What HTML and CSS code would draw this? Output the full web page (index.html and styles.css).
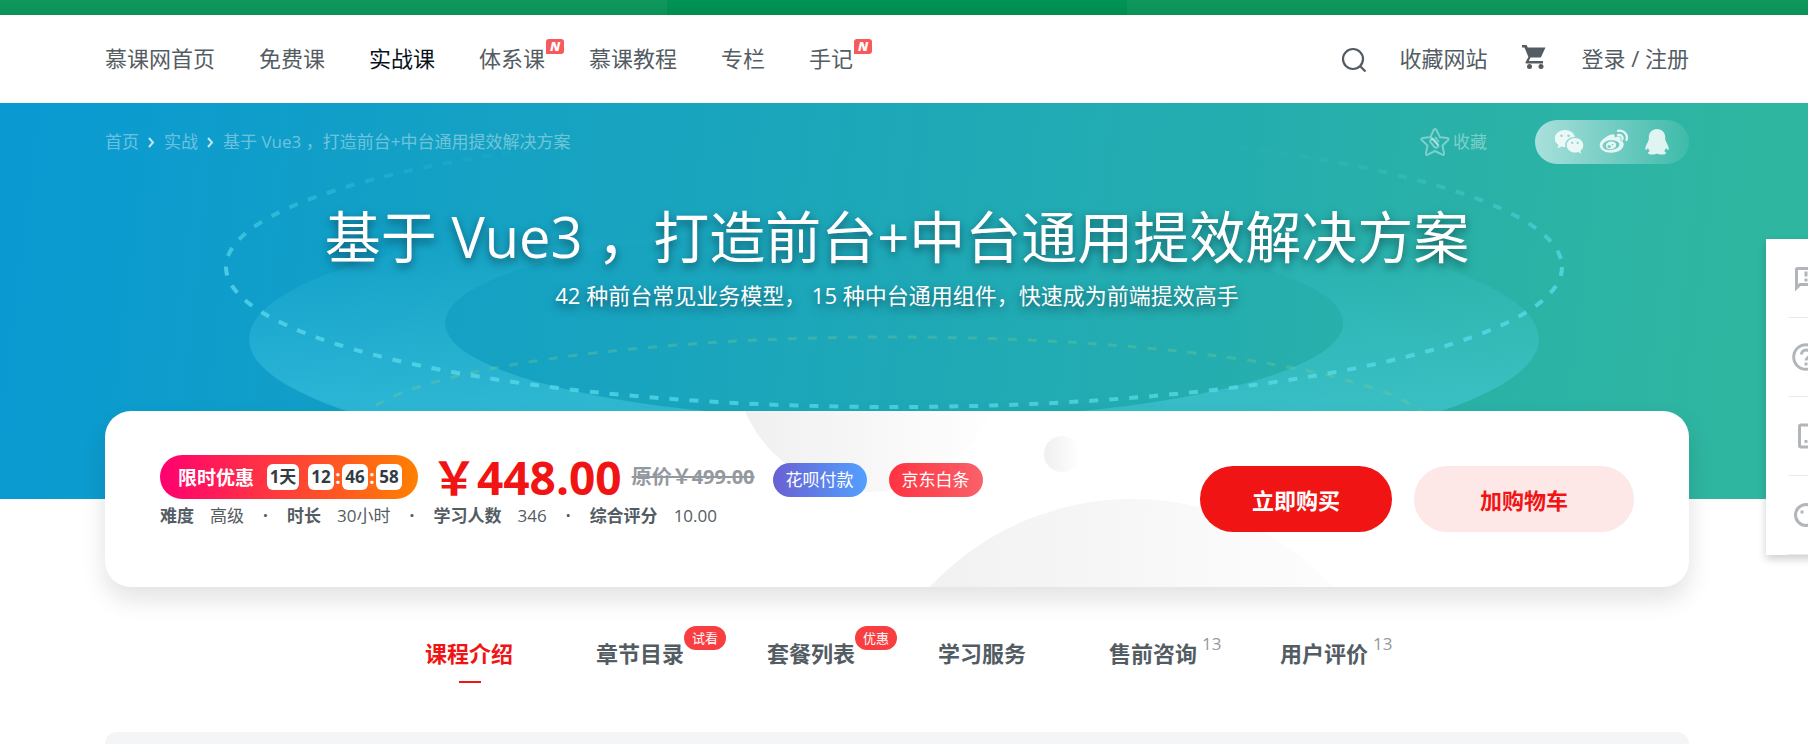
FILE: index.html
```html
<!DOCTYPE html>
<html lang="zh-CN">
<head>
<meta charset="utf-8">
<meta name="viewport" content="width=device-width, initial-scale=1">
<title>基于 Vue3 ，打造前台+中台通用提效解决方案</title>
<link rel="stylesheet" href="styles.css">
</head>
<body>
<div class="promo"><div class="promo-inner"></div></div>

<header class="header shell">
  <nav class="nav">
    <a href="#">慕课网首页</a>
    <a href="#">免费课</a>
    <a href="#" class="current">实战课</a>
    <a href="#">体系课<span class="new">N</span></a>
    <a href="#">慕课教程</a>
    <a href="#">专栏</a>
    <a href="#">手记<span class="new">N</span></a>
  </nav>
  <div class="tools">
    <button class="icon-btn" type="button" aria-label="搜索">
      <svg width="26" height="26" viewBox="0 0 26 26" fill="none" stroke="#545c63" stroke-width="2.2"><circle cx="12" cy="12" r="10"/><path d="M19 19l5.500 5.500"/></svg>
    </button>
    <a href="#" class="fav-site">收藏网站</a>
    <a href="#" class="cart" aria-label="购物车">
      <svg width="26" height="26" viewBox="0 0 26 26" fill="#545c63"><path d="M1 1h4.500L6.800 3.500H24.500L19.800 13.500H9.500L7.800 17H22v2.500H5.500q-1.500 0-.7-1.800L7.400 13 3.500 3.500H1z"/><circle cx="8.500" cy="22.500" r="2.500"/><circle cx="20" cy="22.500" r="2.500"/></svg>
    </a>
    <a href="#">登录 / 注册</a>
  </div>
</header>

<section class="hero">
  <svg class="hero-art" width="1400" height="396" viewBox="197 103 1400 396" fill="none" aria-hidden="true">
    <defs>
      <linearGradient id="ring" x1="0" y1="230" x2="0" y2="430" gradientUnits="userSpaceOnUse"><stop offset="0" stop-color="#52d5ea" stop-opacity="0"/><stop offset="1" stop-color="#52d5ea" stop-opacity=".46"/></linearGradient>
      <linearGradient id="dash" x1="0" y1="145" x2="0" y2="400" gradientUnits="userSpaceOnUse"><stop offset="0" stop-color="#5cdcec" stop-opacity="0"/><stop offset=".5" stop-color="#5cdcec" stop-opacity=".75"/><stop offset="1" stop-color="#5cdcec" stop-opacity=".7"/></linearGradient>
    </defs>
    <path fill="url(#ring)" fill-rule="evenodd" d="M249 339a645 136 0 1 0 1290 0a645 136 0 1 0-1290 0zM445 323a449 97 0 1 0 898 0a449 97 0 1 0-898 0z"/>
    <ellipse cx="894" cy="432" rx="540" ry="95" stroke="#7fd08a" stroke-opacity=".3" stroke-width="3" stroke-dasharray="9 11"/>
    <ellipse cx="894" cy="267" rx="668" ry="140" stroke="url(#dash)" stroke-width="4" stroke-dasharray="9 11"/>
  </svg>
  <div class="hero-bar shell">
    <nav class="crumbs" aria-label="面包屑">
      <a href="#">首页</a>
      <svg width="7" height="11" viewBox="0 0 7 11" fill="none" stroke="#bfe6ef" stroke-width="2"><path d="M1 1l4 4.500L1 10"/></svg>
      <a href="#">实战</a>
      <svg width="7" height="11" viewBox="0 0 7 11" fill="none" stroke="#bfe6ef" stroke-width="2"><path d="M1 1l4 4.500L1 10"/></svg>
      <span>基于 Vue3 ，打造前台+中台通用提效解决方案</span>
    </nav>
    <button class="collect" type="button">
      <svg width="30" height="30" viewBox="0 0 30 30" fill="none" stroke="currentColor" stroke-width="2" stroke-linejoin="round" stroke-linecap="round"><path d="M9.500 10.300l-7 .8q-2 .5-.5 2.200l5.500 5.200L6 26.500q0 2 1.800 1.200L15 24l7.200 3.700q1.800.8 1.800-1.200l-1.500-8 5.500-5.200q1.500-1.700-.5-2.200l-7.500-.8L16.200 2.800q-1.200-1.800-2.400 0l-2.600 5.400q-.7 1.600.5 3l6 6.500"/><path d="M18.500 14.500l-3-4M11 12.500q-1.500 1.200-.3 2.800l3.600 4.500q1.600 1.700 3.200.5 1.600-1.300.3-3l-4-4.800q-1.300-1.300-2.800 0z"/></svg>
      <span>收藏</span>
    </button>
    <div class="share">
      <a href="#" aria-label="微信"><svg width="30" height="26" viewBox="0 0 30 26" fill="currentColor"><path fill-rule="evenodd" d="M11 1C5 1 .8 4.800.8 9.500c0 2.800 1.400 5 3.700 6.600l-.9 3.400 3.800-2q1.800.5 4 .5C10 12.500 14.500 7.800 21 8 20 4 16 1 11 1zM7.500 5.500a1.300 1.300 0 1 1 0 2.600 1.300 1.300 0 0 1 0-2.600zm7 0a1.300 1.300 0 1 1 0 2.600 1.300 1.300 0 0 1 0-2.600z"/><path fill-rule="evenodd" d="M21 9c-4.700 0-8.300 3.200-8.300 7.200s3.600 7.300 8.300 7.300q1.600 0 3.200-.5l3 1.700-.8-2.800c1.700-1.300 2.900-3.300 2.900-5.700C29.300 12.200 25.600 9 21 9zm-2.800 3.800a1.100 1.100 0 1 1 0 2.200 1.100 1.100 0 0 1 0-2.200zm5.500 0a1.100 1.100 0 1 1 0 2.200 1.100 1.100 0 0 1 0-2.200z"/></svg></a>
      <a href="#" aria-label="微博"><svg width="30" height="26" viewBox="0 0 30 26" fill="currentColor"><path fill-rule="evenodd" d="M11 6c3-1.600 5.700-1 4.600 2.400 4-1.600 7-.8 5.800 2.800 2 .7 3.300 2 3.300 4.200 0 4.300-5.500 8.300-12.300 8.300S.7 20.500.7 16.200C.7 12.500 5.500 8 11 6zM12 11.300c-4.700 0-8.500 2.600-8.500 5.500s3.800 4.700 8.500 4.300c5-.4 8.700-3 8.400-5.800-.3-2.500-3.800-4.100-8.400-4z"/><path fill-rule="evenodd" d="M12.700 12.600c-3.200 0-5.700 1.900-5.700 4.300 0 2 2 3.400 4.700 3.300 3.200-.1 5.600-2.100 5.500-4.400 0-1.900-1.900-3.200-4.500-3.200zm-2.500 3.500a1.700 1.500 0 1 1 0 3 1.700 1.500 0 0 1 0-3zm3.300-1.200a.8.8 0 1 1 0 1.600.8.800 0 0 1 0-1.600z"/><path d="M19 1.800c5.500-1.200 10.200 3.600 8.500 9.200M19 6.200c3-.8 5.300 1.600 4.300 4.300" fill="none" stroke="currentColor" stroke-width="2.300" stroke-linecap="round"/></svg></a>
      <a href="#" aria-label="QQ"><svg width="26" height="28" viewBox="0 0 26 28" fill="currentColor"><path d="M13 1c5 0 8.200 3.600 8.200 8.300v2.500c.3.700.8 1.400 1 2.400 1.500 2.500 2.500 4.500 2.500 6.300 0 2-1 2-2.700-.4-.4 1.300-1 2.300-1.800 3.100 1.700.7 2 1.400 1.800 2.100-.6 1.700-7 1.700-9 .3-2 1.400-8.400 1.400-9-.3-.2-.7.100-1.400 1.800-2.100-.8-.8-1.400-1.800-1.800-3.100-1.700 2.400-2.700 2.400-2.700.4 0-1.800 1-3.800 2.500-6.300.2-1 .7-1.700 1-2.400V9.300C4.800 4.600 8 1 13 1z"/></svg></a>
    </div>
  </div>
  <div class="hero-text shell">
    <h1>基于 Vue3 ，打造前台+中台通用提效解决方案</h1>
    <p>42 种前台常见业务模型， 15 种中台通用组件，快速成为前端提效高手</p>
  </div>
</section>

<main class="shell">
  <section class="card">
    <svg class="card-art" width="640" height="176" viewBox="725 411 640 176" aria-hidden="true">
      <defs><linearGradient id="fade"><stop offset="0" stop-color="#efefef"/><stop offset="1" stop-color="#fff"/></linearGradient></defs>
      <circle cx="868" cy="358" r="134" fill="url(#fade)"/>
      <circle cx="1062" cy="454" r="18" fill="url(#fade)"/>
      <circle cx="1132" cy="775" r="276" fill="url(#fade)"/>
    </svg>
    <div class="offer">
      <div class="price-row">
        <div class="countdown">
          <span class="label">限时优惠</span>
          <span class="cell day">1天</span>
          <span class="cell">12</span><i>:</i><span class="cell">46</span><i>:</i><span class="cell">58</span>
        </div>
        <strong class="price">￥448.00</strong>
        <del class="old">原价￥499.00</del>
        <a href="#" class="pay huabei">花呗付款</a>
        <a href="#" class="pay baitiao">京东白条</a>
      </div>
      <div class="stats">
        <b>难度</b><span>高级</span><i>·</i>
        <b>时长</b><span>30小时</span><i>·</i>
        <b>学习人数</b><span>346</span><i>·</i>
        <b>综合评分</b><span>10.00</span>
      </div>
    </div>
    <div class="actions">
      <button type="button" class="buy">立即购买</button>
      <button type="button" class="add">加购物车</button>
    </div>
  </section>

  <nav class="tabs">
    <a href="#" class="on">课程介绍</a>
    <a href="#">章节目录<span class="badge">试看</span></a>
    <a href="#">套餐列表<span class="badge">优惠</span></a>
    <a href="#">学习服务</a>
    <a href="#">售前咨询<span class="count">13</span></a>
    <a href="#">用户评价<span class="count">13</span></a>
  </nav>
  <section class="panel"></section>
</main>

<aside class="side">
  <a href="#" aria-label="意见反馈"><svg width="28" height="28" viewBox="0 0 28 28" fill="none" stroke="#b2b6ba" stroke-width="3"><path d="M4.500 24V5.500q0-1 1-1h17q1 0 1 1v14q0 1-1 1H8z"/><path d="M14 7.500v5M14 14.500v3"/></svg></a>
  <a href="#" aria-label="帮助"><svg width="28" height="28" viewBox="0 0 28 28" fill="none" stroke="#b2b6ba" stroke-width="3"><circle cx="14" cy="14" r="12.300"/><path d="M9.500 11.500c0-6 9-6 9-.5 0 3.500-4.500 3.500-4.500 6.500M14 19.500v3"/></svg></a>
  <a href="#" aria-label="手机应用"><svg width="28" height="28" viewBox="0 0 28 28" fill="none" stroke="#b2b6ba" stroke-width="3"><rect x="7.500" y="3" width="13" height="22" rx="1.500"/><path d="M12.500 19.500h3"/></svg></a>
  <a href="#" aria-label="在线客服"><svg width="28" height="28" viewBox="0 0 28 28" fill="none" stroke="#b2b6ba" stroke-width="3"><circle cx="14" cy="14" r="10.500"/><path d="M8.500 11h3M16.500 11h3"/></svg></a>
</aside>
</body>
</html>
```
FILE: styles.css
```css
* { box-sizing: border-box; }
body {
  margin: 0;
  background: #fff;
  color: #545c63;
  font-family: "Open Sans", "Noto Sans CJK SC", sans-serif;
  font-size: 17px;
  overflow: hidden;
  height: 100vh;
  display: flex;
  flex-direction: column;
}
a { color: inherit; text-decoration: none; }
button { border: 0; padding: 0; background: none; font: inherit; color: inherit; cursor: pointer; }
i { font-style: normal; }
svg { display: block; flex: none; }
.shell { padding-left: 105px; padding-right: 119px; }

.promo { flex: none; height: 15px; background: linear-gradient(#0f985e, #0c9158); }
.promo-inner { width: 460px; height: 100%; margin: 0 auto; position: relative; right: 7px; background: linear-gradient(#009457, #008c4d); }

.header { flex: none; height: 88px; padding-bottom: 4px; display: flex; align-items: center; justify-content: space-between; font-size: 22px; white-space: nowrap; }
.nav { display: flex; gap: 44px; }
.nav a { position: relative; }
.nav .current { color: #07111b; }
.new {
  position: absolute; left: 100%; top: -2px; margin-left: 1px;
  width: 18px; height: 15px; border-radius: 3px 3px 3px 0;
  background: #f75a5c; color: #fff;
  font: italic 800 13px/15px "Open Sans", sans-serif; text-align: center;
}
.tools { display: flex; align-items: center; }
.icon-btn { margin-top: 5px; }
.fav-site { margin: 0 33px 0 32px; }
.cart { margin-right: 35px; }

.hero { flex: none; position: relative; height: 396px; padding-top: 17px; background: linear-gradient(97deg, #0a9ad1 2%, #1fa9b6 52%, #2fb6a0 96%); color: #fff; overflow: hidden; }
.hero-art { position: absolute; top: 0; left: 50%; margin-left: -707px; }
.hero-bar { position: relative; display: flex; align-items: center; height: 44px; color: rgba(255, 255, 255, .4); white-space: nowrap; }
.crumbs { display: flex; align-items: center; gap: 9px; margin-right: auto; line-height: 24px; }
.collect { display: flex; align-items: center; gap: 3px; margin-right: 48px; line-height: 24px; }
.share { display: flex; align-items: center; justify-content: space-between; width: 154px; height: 44px; padding: 0 19px; border-radius: 22px; background: linear-gradient(90deg, rgba(255, 255, 255, .6), rgba(255, 255, 255, .08)); color: rgba(255, 255, 255, .82); }
.hero-text { position: relative; margin-top: 39px; text-align: center; text-shadow: 0 4px 8px rgba(7, 17, 27, .5); }
.hero-text h1 { margin: 0 0 10px; font-size: 56px; line-height: 66px; font-weight: 400; }
.hero-text p { margin: 0; font-size: 22px; line-height: 33px; }

main { flex: 1; display: flex; flex-direction: column; min-height: 0; }
.card { flex: none; position: relative; display: flex; justify-content: space-between; min-height: 176px; margin-top: -88px; padding: 44px 55px; border-radius: 26px; background: #fff; box-shadow: 0 12px 24px rgba(7, 17, 27, .12); white-space: nowrap; }
.card-art { position: absolute; top: 0; left: 620px; }
.offer, .actions { position: relative; }
.price-row { display: flex; align-items: center; height: 44px; }
.countdown { display: flex; align-items: center; height: 44px; padding: 0 16px 0 18px; border-radius: 22px; background: linear-gradient(90deg, #ff0070, #ff8000); color: #fff; font-size: 19px; font-weight: 700; }
.label { margin-right: 13px; }
.cell { width: 26px; height: 26px; border-radius: 6px; background: #fff; color: #333c44; font-size: 17px; line-height: 26px; text-align: center; }
.day { width: 32px; margin-right: 9px; }
.countdown i { width: 8px; text-align: center; line-height: 24px; }
.price { margin-left: 13px; color: #f01414; font-size: 46px; line-height: 44px; }
.old { margin-left: 10px; color: #93999f; font-size: 20px; line-height: 44px; font-weight: 700; }
.pay { margin: 6px 0 0 18px; height: 34px; padding: 0 13px; border-radius: 17px; color: #fff; line-height: 33px; }
.huabei { background: linear-gradient(90deg, #6a60d2, #52a0ff); }
.baitiao { margin-left: 22px; background: linear-gradient(90deg, #ff3341, #f9626a); }
.stats { display: flex; line-height: 34px; }
.stats b { font-weight: 700; }
.stats span { margin-left: 16px; }
.stats i { width: 43px; text-align: center; font-weight: 700; }
.actions { display: flex; gap: 22px; margin-top: 11px; }
.actions button { height: 66px; border-radius: 33px; font-size: 22px; font-weight: 700; }
.buy { width: 192px; background: #f01414; color: #fff; }
.actions .add { width: 220px; background: #fde7e7; color: #f01414; }

.tabs { flex: none; display: flex; justify-content: center; margin: 46px 0 49px; }
.tabs a { position: relative; width: 171px; padding: 0 41px; font-size: 22px; line-height: 40px; font-weight: 700; white-space: nowrap; }
.tabs .on { color: #f01414; }
.tabs .on::after { content: ""; display: block; width: 22px; height: 2px; margin: 8px auto 0; background: #f01414; }
.badge { position: absolute; left: 129px; top: -7px; height: 24px; padding: 0 8px; border-radius: 12px; background: #f83e40; color: #fff; font-size: 13px; line-height: 24px; font-weight: 400; }
.count { position: absolute; left: 134px; top: -1px; height: 24px; color: #93999f; font-size: 17px; line-height: 24px; font-weight: 400; }
.panel { flex: 1; border-radius: 13px 13px 0 0; background: #f3f5f7; }

.side { position: fixed; top: 239px; right: -38px; width: 80px; padding: 0 22px; background: #fff; box-shadow: 0 4px 8px rgba(7, 17, 27, .2); }
.side a { display: flex; align-items: center; justify-content: center; height: 79px; border-bottom: 1px solid #e8ebed; }
```
